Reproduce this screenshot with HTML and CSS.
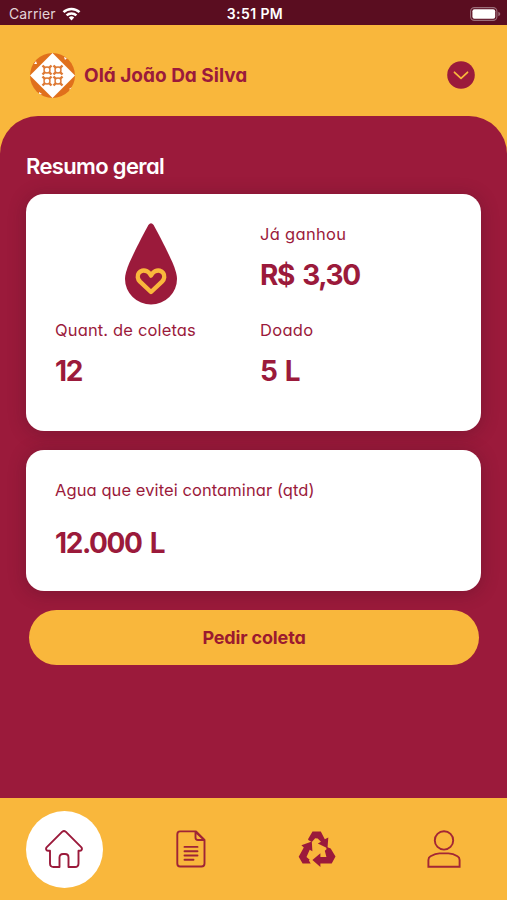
FILE: index.html
```html
<!DOCTYPE html>
<html lang="pt-BR">
<head>
  <meta charset="UTF-8" />
  <meta name="viewport" content="width=device-width, initial-scale=1.0"/>
  <title>Resumo geral</title>
  <link rel="stylesheet" href="styles.css">
</head>
<body>

  <div class="statusbar">
    <div class="carrier">
      <span class="carrier-name">Carrier</span>
      <svg class="wifi" width="19" height="14" viewBox="0 0 18 14" fill="none" stroke="#fff" stroke-width="2.5">
        <path d="M1 5.2a11.3 11.3 0 0 1 16 0M4.1 8.4a7 7 0 0 1 9.8 0"/>
        <path d="M9 13.4l-2.7-2.9a3.9 3.9 0 0 1 5.4 0z" fill="#fff" stroke="none"/>
      </svg>
    </div>
    <div class="clock">3:51 PM</div>
    <svg class="battery" width="31" height="14" viewBox="0 0 31 14">
      <rect x=".6" y=".6" width="26.3" height="12.8" rx="3.8" fill="none" stroke="#9b6e7a" stroke-width="1.1"/>
      <rect x="2.4" y="2.3" width="22.8" height="9.4" rx="2" fill="#fff"/>
      <path d="M28.3 4.8q2 .8 2 2.2t-2 2.2z" fill="#9b6e7a"/>
    </svg>
  </div>

  <header class="header">
    <svg class="avatar" width="45" height="45" viewBox="0 0 45 45">
      <defs>
        <clipPath id="round"><circle cx="22.5" cy="22.5" r="22.5"/></clipPath>
        <g id="tile" fill="none" stroke="#de7a35" stroke-width="1.4">
          <circle cx="5" cy="5" r="3"/>
          <path d="M.5 .5l2.4 2.4M9.5 .5l-2.4 2.4M.5 9.5l2.4-2.4M9.5 9.5l-2.4-2.4" stroke-width="2.4"/>
        </g>
      </defs>
      <g clip-path="url(#round)">
        <rect width="45" height="45" fill="#e0701c"/>
        <path d="M4 11l2-3 1 3zM34 4l3 1-2 2zM39 36l3-2-1 3zM9 39l3 2-3 1z" fill="#fff"/>
        <path d="M22.5 0L45 22.5 22.5 45 0 22.5z" fill="#fff"/>
        <use href="#tile" x="12" y="12"/>
        <use href="#tile" x="23" y="12"/>
        <use href="#tile" x="12" y="23"/>
        <use href="#tile" x="23" y="23"/>
      </g>
    </svg>
    <div class="name">Olá João Da Silva</div>
    <svg class="toggle" width="28" height="28" viewBox="0 0 28 28">
      <circle cx="14" cy="14" r="13.8" fill="#9b1a3b"/>
      <path d="M7.5 11.3l6.5 6 6.5-6" fill="none" stroke="#f9b73c" stroke-width="1.8" stroke-linecap="round" stroke-linejoin="round"/>
    </svg>
  </header>

  <main class="content">
    <h1 class="title">Resumo geral</h1>

    <section class="card resumo">
      <div class="drop">
        <svg width="52" height="82" viewBox="0 0 52 82">
          <path d="M23.4 2Q26-1.3 28.6 2C34 11.5 42.5 28.500 47.500 39.500Q52 50 52 56a26 25.500 0 0 1-52 0Q0 50 4.500 39.500C9.500 28.500 18 11.500 23.400 2z" fill="#9b1a3b"/>
          <path d="M26 69L15 58.600C9.500 53 15 45 22 48.300Q24.500 49.500 26 52.600Q27.500 49.500 30 48.300C37 45 42.500 53 37 58.600z" fill="none" stroke="#f9b73c" stroke-width="4.400" stroke-linejoin="round"/>
        </svg>
      </div>
      <div class="item">
        <div class="label ganhou">Já ganhou</div>
        <div class="valor reais">R$ 3,30</div>
      </div>
      <div class="item">
        <div class="label coletas">Quant. de coletas</div>
        <div class="valor total">12</div>
      </div>
      <div class="item">
        <div class="label doado">Doado</div>
        <div class="valor">5 L</div>
      </div>
    </section>

    <section class="card agua">
      <div class="label">Agua que evitei contaminar (qtd)</div>
      <div class="valor litros">12.000 L</div>
    </section>

    <button class="pedir">Pedir coleta</button>
  </main>

  <nav class="tabs">
    <a class="tab active">
      <svg width="38" height="38" viewBox="0 0 38 38" fill="none" stroke="#9b1a3b" stroke-width="1.9" stroke-linejoin="round">
        <path d="M17.3 1.7Q19 .3 20.7 1.7L36.2 17.2C37.8 19 36.5 20.8 34.5 20.8H33.5V33.5Q33.500 37 30 37H23.500V27.500Q23.500 24 20 24H18Q14.500 24 14.500 27.500V37H8.500Q5 37 5 33.500V20.800H3.500C1.500 20.800 .2 19 1.800 17.200z"/>
      </svg>
    </a>
    <a class="tab">
      <svg width="30" height="38" viewBox="0 0 30 38" fill="none" stroke="#9f2436" stroke-width="1.9" stroke-linejoin="round" stroke-linecap="round">
        <path d="M4 1.4H20L28.5 9.9V33.5Q28.5 36.5 25.5 36.5H4Q1.3 36.5 1.3 33.5V4.4Q1.3 1.4 4 1.4zM19.500 1.700V7.500Q19.500 10 22 10H28.200M19.700 2L28 9.700"/>
        <path d="M8.500 16.900h13M8.500 21.200h13M8.500 25.500h13M8.500 29.800h9"/>
      </svg>
    </a>
    <a class="tab">
      <svg width="38" height="38" viewBox="0 0 38 38" fill="#9b1a3b">
        <path d="M14.500 1.500h8.300l4 7.800 3.500-1.800-.8 10.800-9.700-4.800 3.200-1.700-3.300-3.200-2.500-.4-3.400 3.800-3.200-1.700-.6-1z"/>
        <path d="M3.400 15.300L13.800 11.600l.6 9.700-2.700-1.500-3.200 7.300 3.200 2.600-.8.900 1.800 3H4.600L.7 26.800l5.100-9.300z"/>
        <path d="M14.400 30l8-6.800v3.700h6l-1.600-6.200 1.700-1.500-.3-2.500 4.500 1.700 4.800 8-3.800 7.200H22.400v3.300z"/>
      </svg>
    </a>
    <a class="tab">
      <svg width="34" height="38" viewBox="0 0 34 38" fill="none" stroke="#a32735" stroke-width="1.9">
        <circle cx="17" cy="10.4" r="9.2"/>
        <path d="M1.4 36.800V30Q1.400 27.500 3.500 26.300 8.500 23.400 12.500 23.400H21.500Q26 23.400 30.500 26.300 32.600 27.500 32.600 30V36.800z"/>
      </svg>
    </a>
  </nav>

</body>
</html>
```
FILE: styles.css
```css
* {
  box-sizing: border-box;
}

body {
  margin: 0;
  height: 900px;
  display: flex;
  flex-direction: column;
  font-family: Inter, "Open Sans", sans-serif;
  font-feature-settings: "cv11";
  background: #f9b73c;
  color: #9b1a3b;
}

.statusbar {
  height: 25px;
  display: grid;
  grid-template-columns: 1fr auto 1fr;
  align-items: center;
  padding: 2px 6px 0 9px;
  background: #5a0d20;
  color: #fff;
  font-size: 14px;
  line-height: 20px;
  font-feature-settings: normal;
}

.carrier {
  display: flex;
  align-items: center;
  gap: 6px;
}

.carrier-name {
  color: #e2d3d7;
  letter-spacing: 0.1px;
}

.clock {
  font-weight: 600;
  letter-spacing: 0.4px;
}

.battery {
  justify-self: end;
}

.header {
  height: 91px;
  display: flex;
  align-items: center;
  padding: 9px 32px 0 30px;
}

.name {
  flex: 1;
  margin-left: 9px;
  padding-top: 1px;
  font-size: 19px;
  font-weight: 700;
}

.content {
  flex: 1;
  display: flex;
  flex-direction: column;
  padding: 35px 26px 0;
  background: #9b1a3b;
  border-radius: 38px 38px 0 0;
}

.title {
  margin: 0 0 13px;
  font-size: 22px;
  line-height: 30px;
  font-weight: 600;
  letter-spacing: -0.65px;
  color: #fff;
}

.card {
  background: #fff;
  border-radius: 18px;
  padding: 28px;
  box-shadow: 0 2px 18px rgba(60, 15, 30, 0.32);
}

.resumo {
  height: 237px;
  display: grid;
  grid-template-columns: 206px 1fr;
  grid-template-rows: 96px 1fr;
}

.drop {
  padding: 1px 12px 0 0;
  text-align: center;
}

.label {
  font-size: 16.5px;
  line-height: 24px;
  letter-spacing: 0.15px;
}

.ganhou,
.doado {
  letter-spacing: 0.3px;
}

.valor {
  margin-top: 12px;
  font-size: 28px;
  line-height: 34px;
  font-weight: 700;
  letter-spacing: -1.4px;
  word-spacing: 3px;
}

.agua {
  height: 141px;
  margin-top: 19px;
}

.agua .label,
.agua .valor,
.coletas,
.total {
  padding-left: 1px;
}

.agua .label {
  letter-spacing: 0.08px;
}

.litros {
  margin-top: 24px;
}

.pedir {
  height: 55px;
  margin: 19px 2px 0 3px;
  border: none;
  border-radius: 28px;
  background: #f9b73c;
  color: #9b1a2f;
  font-family: inherit;
  font-feature-settings: inherit;
  font-size: 18px;
  font-weight: 700;
  letter-spacing: -0.15px;
}

.tabs {
  height: 102px;
  display: grid;
  grid-template-columns: repeat(4, 1fr);
  align-items: center;
  justify-items: center;
  padding-left: 1px;
}

.tab {
  width: 77px;
  height: 77px;
  display: flex;
  align-items: center;
  justify-content: center;
  border-radius: 50%;
}

.active {
  background: #fff;
}
```
